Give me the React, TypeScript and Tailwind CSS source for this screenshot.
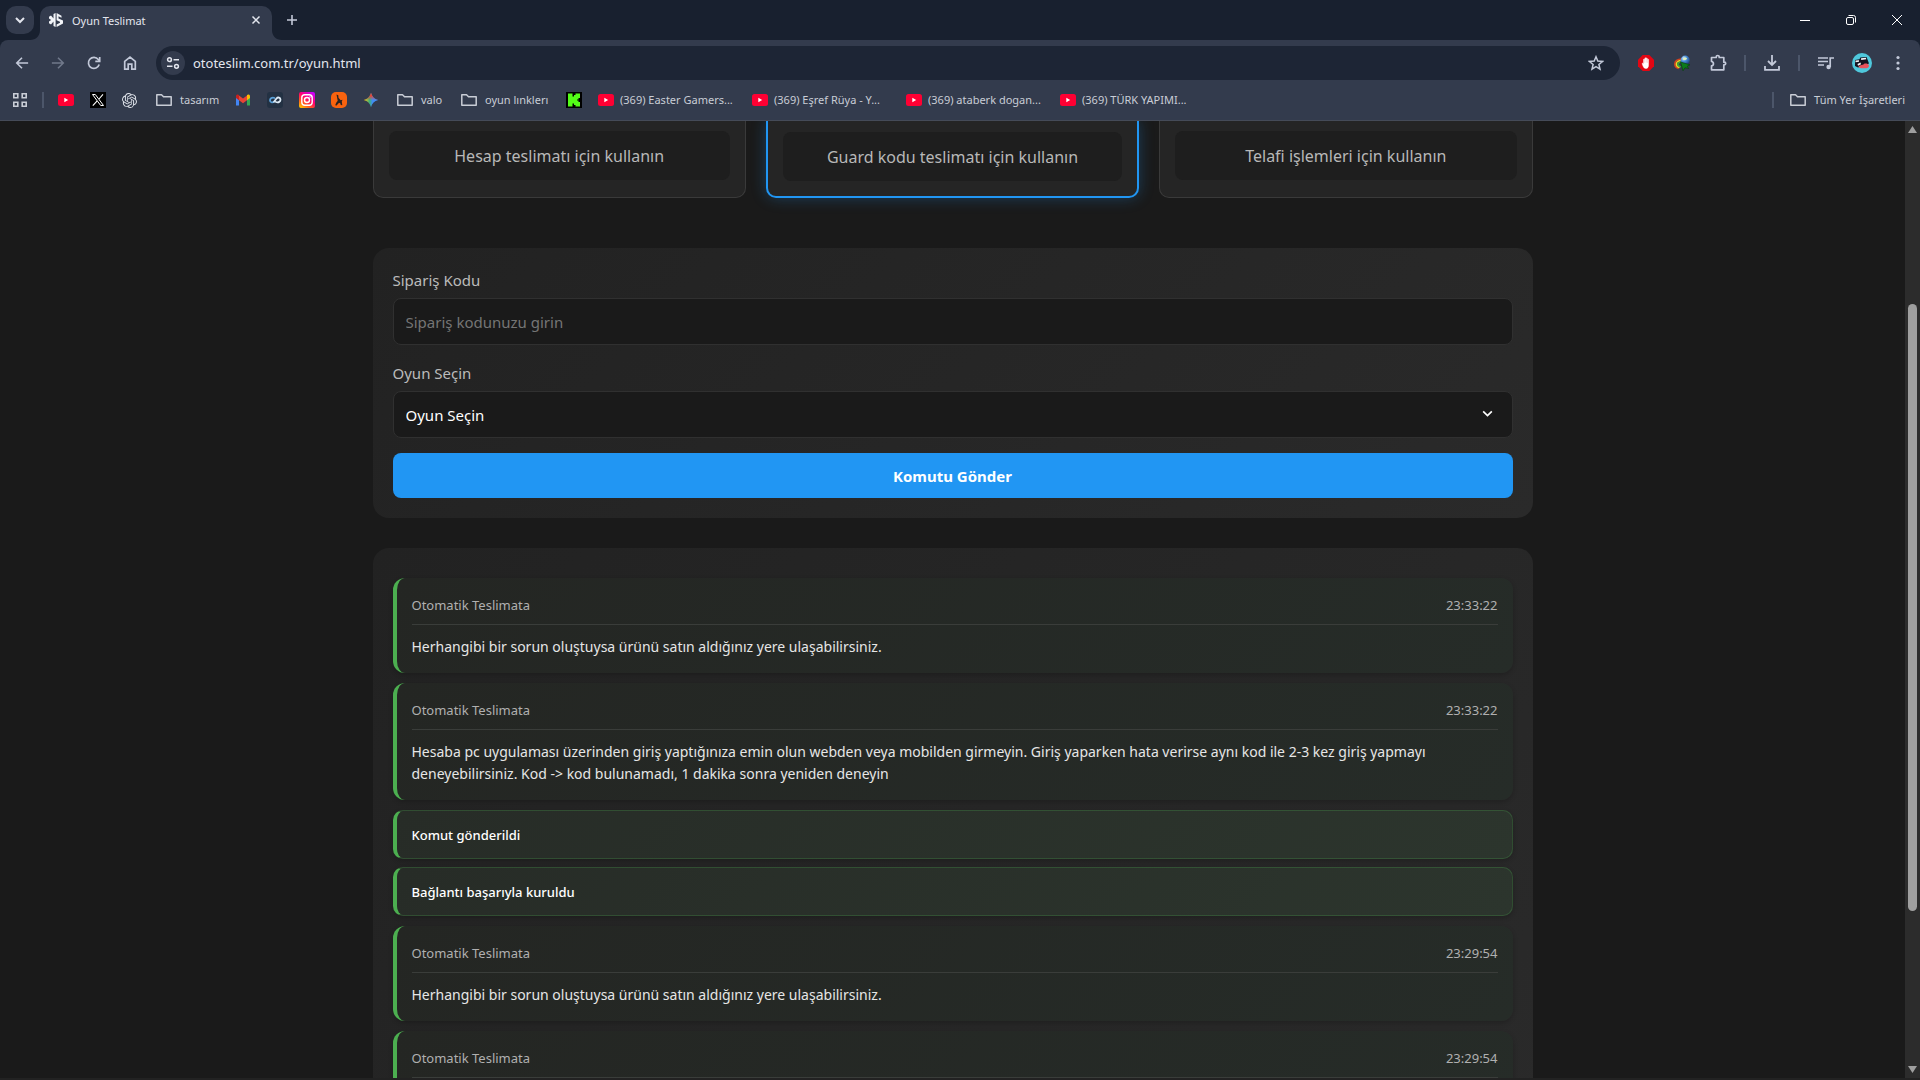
import type { ReactNode } from "react";
import { SiOpenai } from "react-icons/si";

/* ---------- toolbar icons ---------- */

const ChevronIcon = ({ className, strokeWidth = 2 }: { className?: string; strokeWidth?: number }) => (
  <svg viewBox="0 0 12 12" className={className} fill="none" stroke="currentColor" strokeWidth={strokeWidth}>
    <path d="M2 4l4 4 4-4" />
  </svg>
);

const BackIcon = ({ className }: { className?: string }) => (
  <svg viewBox="0 0 16 16" className={className} fill="none" stroke="currentColor" strokeWidth="1.8">
    <path d="M15 8H2.500M8 2L2 8l6 6" />
  </svg>
);

const ReloadIcon = () => (
  <svg viewBox="0 0 16 16" className="size-4" fill="none" stroke="currentColor" strokeWidth="1.7">
    <path d="M13.200 9.500A5.500 5.500 0 1 1 12.300 4.500L13.500 6" />
    <path d="M13.700 2v4.400H9.300" />
  </svg>
);

const HomeIcon = () => (
  <svg viewBox="0 0 16 16" className="size-4" fill="none" stroke="currentColor" strokeWidth="1.7">
    <path d="M2.700 6.300L8 2l5.300 4.300v7.900H9.800V9.200H6.200v5H2.700z" />
  </svg>
);

const TuneIcon = () => (
  <svg viewBox="0 0 16 16" className="size-4" fill="none" stroke="currentColor" strokeWidth="1.5">
    <circle cx="4.500" cy="4.700" r="1.900" />
    <path d="M8.500 4.700H14M2 11.300h5.500" />
    <circle cx="11.500" cy="11.300" r="1.900" />
  </svg>
);

const StarIcon = () => (
  <svg viewBox="0 0 16 16" className="size-4" fill="none" stroke="currentColor" strokeWidth="1.500">
    <path d="M8 1.800l1.800 4.300 4.700.4-3.600 3 1.100 4.600L8 11.700l-4 2.400 1.100-4.600-3.600-3 4.700-.4z" />
  </svg>
);

const AdblockIcon = () => (
  <svg viewBox="0 0 16 16" className="size-4">
    <path d="M4.700 0h6.600L16 4.700v6.600L11.300 16H4.700L0 11.300V4.700z" fill="#e30613" />
    <path
      d="M4 8.400c.6-.5 1.100-.1 1.500.6V4.500c0-.8 1-.8 1 0v3h.3V3.300c0-.9 1.100-.9 1.100 0v4.200h.3V3.500c0-.9 1.100-.9 1.100 0v4.200h.3V4.700c0-.8 1-.8 1 0v5.200c0 2.400-1 3.600-2.800 3.600-1.600 0-2.500-1.200-3.800-5.100z"
      fill="#fff"
      stroke="#fff"
      strokeWidth=".4"
    />
  </svg>
);

const DownloadManagerIcon = () => (
  <svg viewBox="0 0 16 16" className="size-4">
    <defs>
      <radialGradient id="globe" cx="0.35" cy="0.3" r="0.8">
        <stop offset="0" stopColor="#d9efff" />
        <stop offset="0.4" stopColor="#4a8ed8" />
        <stop offset="1" stopColor="#16346f" />
      </radialGradient>
    </defs>
    <path d="M7.500 4C3.500 4 .8 6.200.8 9c0 2.200 1.600 4 4 4.500" fill="none" stroke="#d9411e" strokeWidth="1.500" />
    <path d="M7.500 5.500C4.300 5.500 2.300 7 2.300 9c0 1.700 1.200 3 3.300 3.600" fill="none" stroke="#f3d321" strokeWidth="1.500" />
    <path d="M8 7C5.500 7 3.800 7.900 3.800 9.300c0 1.200 1 2 3 2.700" fill="none" stroke="#37a93a" strokeWidth="1.600" />
    <circle cx="11.200" cy="5.200" r="4.600" fill="url(#globe)" />
    <path d="M9.200 3.700c1-1.600 3-1.400 3.600-.6.700 1-1 2-1.800 1.800-1 0-2.300.4-1.800-1.200z" fill="#dff0b8" />
    <path d="M6.500 7l9.500 2.800-2.800 1.400 1.500 2.300-3.700-.7L9 15.800z" fill="#0c7a1c" stroke="#063f0c" strokeWidth=".6" />
  </svg>
);

const PuzzleIcon = () => (
  <svg viewBox="0 0 18 18" className="size-[18px]" fill="none" stroke="currentColor" strokeWidth="1.700" strokeLinejoin="round">
    <path d="M2.500 3.500h4.700V3a1.500 1.500 0 0 1 3 0v.5h4.600v4.700h.6a1.300 1.300 0 0 1 0 2.600h-.6v5H2.500v-3.900c2.600-.4 2.600-4 0-4.400z" />
  </svg>
);

const DownloadIcon = () => (
  <svg viewBox="0 0 16 16" className="size-4" fill="none" stroke="currentColor" strokeWidth="1.800">
    <path d="M8 0v9.500M4 6l4 4 4-4M1 11v3.800h14V11" />
  </svg>
);

const MediaIcon = () => (
  <svg viewBox="0 0 16 16" className="size-4" fill="none" stroke="currentColor" strokeWidth="1.700">
    <path d="M0 3h10M0 6.500h10M0 10h6" />
    <path d="M12.200 12V3H16" />
    <circle cx="10.600" cy="12" r="2.200" fill="currentColor" stroke="none" />
  </svg>
);

const AvatarIcon = () => (
  <svg viewBox="0 0 20 20" className="size-5">
    <circle cx="10" cy="10" r="10" fill="#4fc8dc" />
    <path d="M3 7l4.500-.8.800-1.700 6.200-.5 1 2.500 1.500 4-5 2-6 2L3 13z" fill="#15121f" />
    <path d="M3.500 7.500l3.500-.3v1.500l-3.500.6z" fill="#f4f4f8" />
    <path d="M9 5.300l5-.6.200 1.500-5 .7z" fill="#f4f4f8" />
    <path d="M5.500 11l3-1.400.5 1.700-3 1.400z" fill="#f4f4f8" />
    <path d="M6.500 13.500c1.500-1.800 5-1.400 6-3 1.500-.3 4.500.2 4.500 2.200 0 2.300-2.300 2.600-5 2.500-2.200 0-4.700.3-5.500-1.700z" fill="#e8525c" />
  </svg>
);

const DotsIcon = () => (
  <svg viewBox="0 0 16 16" className="size-4" fill="currentColor">
    <circle cx="8" cy="2.500" r="1.600" />
    <circle cx="8" cy="8" r="1.600" />
    <circle cx="8" cy="13.500" r="1.600" />
  </svg>
);

/* ---------- bookmark icons ---------- */

const SiteLogo = () => (
  <svg viewBox="0 0 16 16" className="size-4" fill="#f2f4f8">
    <path d="M7.600 1v14L5.500 14V9.500L3 12.500 1 11.300V9.500L3.200 8 1 6.500V4.700L3 3.500l2.500 3V2z" />
    <path d="M8.600 1l4.900 2.700v2L10.500 4.300v2.200L15 8.500v3L8.600 15v-2.600l3.400-1.700v-.9L8.600 8.300z" />
  </svg>
);

const AppsIcon = () => (
  <svg viewBox="0 0 16 16" className="size-4" fill="none" stroke="currentColor" strokeWidth="1.600">
    <path d="M1.800 1.800h4v4h-4zM10.200 1.800h4v4h-4zM1.800 10.200h4v4h-4zM10.200 10.200h4v4h-4z" />
  </svg>
);

const FolderIcon = () => (
  <svg viewBox="0 0 20 20" className="size-5 shrink-0" fill="none" stroke="currentColor" strokeWidth="1.500">
    <path d="M2.800 4.800h4.700l2 2h7.700v8.400H2.800z" strokeLinejoin="round" />
  </svg>
);

const YoutubeIcon = () => (
  <svg viewBox="0 0 16 16" className="size-4 shrink-0">
    <rect y="2" width="16" height="12" rx="2.500" fill="#ff0033" />
    <path d="M6.300 5.700L10.200 8l-3.900 2.300z" fill="#fff" />
  </svg>
);

const XIcon = () => (
  <svg viewBox="0 0 16 16" className="size-4">
    <rect width="16" height="16" fill="#000" />
    <path d="M2.500 2.500h2.800l8.200 11h-2.800z" fill="none" stroke="#fff" />
    <path d="M13 2.300L9 7M7 9.200l-4.200 4.500" stroke="#fff" strokeWidth="1.100" />
  </svg>
);

const GmailIcon = () => (
  <svg viewBox="0 0 16 16" className="size-4">
    <path d="M1 4v9.500h3V7z" fill="#4285f4" />
    <path d="M15 4v9.500h-3V7z" fill="#34a853" />
    <path d="M4 3.500v4.800l4 3 4-3V3.500l-4 3z" fill="#ea4335" />
    <path d="M1 4.200c0-1.800 1.800-2.200 3-1.200v5.300L1 6z" fill="#c5221f" />
    <path d="M15 4.200c0-1.800-1.800-2.200-3-1.200v5.300L15 6z" fill="#fbbc04" />
  </svg>
);

const WaveIcon = () => (
  <svg viewBox="0 0 16 16" className="size-4" fill="none" strokeWidth="1.800" strokeLinecap="round">
    <rect width="16" height="16" rx="3" fill="#233143" />
    <path d="M7.500 6C5 5 3 6.500 3 8.300c0 2 2.300 2.700 4 1.500" stroke="#5aa0d8" />
    <path d="M7 9.800l2.500-3.300c1.500-1.800 4-.9 4 1.200 0 1.900-2 3.200-4.500 2.300" stroke="#dceaf6" />
  </svg>
);

const InstagramIcon = () => (
  <svg viewBox="0 0 16 16" className="size-4">
    <defs>
      <linearGradient id="insta" x1="0.1" y1="1" x2="0.8" y2="0">
        <stop offset="0" stopColor="#ffc800" />
        <stop offset="0.3" stopColor="#ff5a1f" />
        <stop offset="0.6" stopColor="#ff0070" />
        <stop offset="1" stopColor="#c800ff" />
      </linearGradient>
    </defs>
    <rect width="16" height="16" rx="2" fill="url(#insta)" />
    <rect x="2.800" y="2.800" width="10.400" height="10.400" rx="3" fill="none" stroke="#fff" strokeWidth="1.400" />
    <circle cx="8" cy="8" r="2.500" fill="none" stroke="#fff" strokeWidth="1.400" />
    <circle cx="11" cy="5" r=".7" fill="#fff" />
  </svg>
);

const OrangeIcon = () => (
  <svg viewBox="0 0 16 16" className="size-4">
    <rect width="16" height="16" rx="5" fill="#f9630f" />
    <path
      d="M5.500 2.500l1.800.8.200 2.500 2.200 2.500 1.800-.5-.7 1.700.5 3.700-1.500-.2-.8-2.300-1.800.7-1.500 2-1.500-.2 1-2.500 1.500-2z"
      fill="#2b2320"
    />
  </svg>
);

const GeminiIcon = () => (
  <svg viewBox="0 0 16 16" className="size-4">
    <defs>
      <linearGradient id="gem" x1="0" y1="0.5" x2="1" y2="0.5">
        <stop offset="0.05" stopColor="#f6c514" />
        <stop offset="0.4" stopColor="#3fae7a" />
        <stop offset="0.6" stopColor="#3f8cf4" />
        <stop offset="1" stopColor="#4b8bf5" />
      </linearGradient>
      <linearGradient id="gemTop" x1="0" y1="0" x2="0" y2="1">
        <stop offset="0.2" stopColor="#ea4335" />
        <stop offset="0.5" stopColor="#ea4335" stopOpacity="0" />
      </linearGradient>
    </defs>
    <path d="M8 .8C9.200 4.800 11.200 6.800 15.200 8 11.200 9.200 9.200 11.200 8 15.200 6.800 11.200 4.800 9.200.8 8 4.800 6.800 6.800 4.800 8 .8z" fill="url(#gem)" />
    <path d="M8 .8C9.200 4.800 11.200 6.800 15.200 8 11.200 9.200 9.200 11.200 8 15.200 6.800 11.200 4.800 9.200.8 8 4.800 6.800 6.800 4.800 8 .8z" fill="url(#gemTop)" />
  </svg>
);

const KickIcon = () => (
  <svg viewBox="0 0 16 16" className="size-4">
    <rect width="16" height="16" fill="#000" />
    <path
      d="M2 1.500h4.500v3H8V3h1.500V1.500H14V6h-1.500v1.500H11v1h1.500V10H14v4.500H9.500V13H8v-1.500H6.500v3H2z"
      fill="#53fc18"
    />
  </svg>
);

type Bookmark = { icon: ReactNode; label?: string; name: string; className?: string };

const bookmarks: Bookmark[] = [
  { icon: <YoutubeIcon />, name: "YouTube" },
  { icon: <XIcon />, name: "X" },
  { icon: <SiOpenai className="size-[15px] text-[#dfe3ea]" />, name: "ChatGPT" },
  { icon: <FolderIcon />, name: "tasarım", label: "tasarım", className: "w-[81px]" },
  { icon: <GmailIcon />, name: "Gmail" },
  { icon: <WaveIcon />, name: "Wave" },
  { icon: <InstagramIcon />, name: "Instagram" },
  { icon: <OrangeIcon />, name: "Games" },
  { icon: <GeminiIcon />, name: "Gemini" },
  { icon: <FolderIcon />, name: "valo", label: "valo", className: "w-16" },
  { icon: <FolderIcon />, name: "oyun", label: "oyun lınklerı", className: "w-[107px]" },
  { icon: <KickIcon />, name: "Kick" },
  { icon: <YoutubeIcon />, name: "Easter", label: "(369) Easter Gamers...", className: "w-[154px]" },
  { icon: <YoutubeIcon />, name: "Eşref", label: "(369) Eşref Rüya - Y...", className: "w-[154px]" },
  { icon: <YoutubeIcon />, name: "ataberk", label: "(369) ataberk dogan...", className: "w-[154px]" },
  { icon: <YoutubeIcon />, name: "Türk", label: "(369) TÜRK YAPIMI...", className: "w-[154px]" },
];

const ToolButton = ({ label, className = "", children }: { label: string; className?: string; children: ReactNode }) => (
  <button aria-label={label} className={`flex size-7 shrink-0 items-center justify-center ${className}`}>
    {children}
  </button>
);

const Divider = () => <span className="h-4 w-[2px] shrink-0 bg-[#4c566a]" />;

const TabStrip = () => (
  <div className="flex h-10 shrink-0 items-center bg-[#18202f] pl-[6px]">
    <button aria-label="Sekmelerde ara" className="flex size-7 items-center justify-center rounded-[10px] bg-[#333b4d] text-[#e3e6ee]">
      <ChevronIcon className="size-3" />
    </button>
    <div className="relative ml-[6px] flex h-[34px] w-[232px] items-center self-end rounded-t-[10px] bg-[#333b4d] pr-2 pb-[6px] pl-2 text-[11px] text-[#e3e6ee]">
      <svg viewBox="0 0 10 10" className="absolute bottom-0 -left-[10px] size-[10px]">
        <path d="M10 0v10H0C6 10 10 6 10 0z" fill="#333b4d" />
      </svg>
      <svg viewBox="0 0 10 10" className="absolute -right-[10px] bottom-0 size-[10px]">
        <path d="M0 0v10h10C4 10 0 6 0 0z" fill="#333b4d" />
      </svg>
      <SiteLogo />
      <span className="ml-2 flex-1 pt-[2px]">Oyun Teslimat</span>
      <button aria-label="Sekmeyi kapat" className="flex size-4 items-center justify-center">
        <svg viewBox="0 0 10 10" className="size-[10px]" stroke="currentColor" strokeWidth="1.500">
          <path d="M1.500 1.500l7 7M8.500 1.500l-7 7" />
        </svg>
      </button>
    </div>
    <button aria-label="Yeni sekme" className="ml-[6px] flex size-7 items-center justify-center text-[#c3c9d9]">
      <svg viewBox="0 0 12 12" className="size-3" stroke="currentColor" strokeWidth="1.600">
        <path d="M6 1v10M1 6h10" />
      </svg>
    </button>
    <div className="ml-auto flex h-full text-white">
      <button aria-label="Simge durumuna küçült" className="flex w-[46px] items-center justify-center">
        <svg viewBox="0 0 10 10" className="size-[10px]" stroke="currentColor">
          <path d="M0 5.500h10" />
        </svg>
      </button>
      <button aria-label="Geri yükle" className="flex w-[46px] items-center justify-center">
        <svg viewBox="0 0 10 10" className="size-[10px]" fill="none" stroke="currentColor">
          <rect x=".5" y="2.500" width="7" height="7" rx="1.500" />
          <path d="M2.500 .5H7.500a2 2 0 0 1 2 2V7.500" />
        </svg>
      </button>
      <button aria-label="Kapat" className="flex w-[46px] items-center justify-center">
        <svg viewBox="0 0 10 10" className="size-[10px]" stroke="currentColor">
          <path d="M0 0l10 10M10 0L0 10" />
        </svg>
      </button>
    </div>
  </div>
);

const Toolbar = () => (
  <div className="bg-[#18202f]">
    <div className="flex h-[46px] items-center gap-2 rounded-t-lg bg-[#333b4d] px-2 text-[#c3c9d9]">
      <ToolButton label="Geri">
        <BackIcon className="size-[14px]" />
      </ToolButton>
      <ToolButton label="İleri" className="text-[#71798b]">
        <BackIcon className="size-[14px] rotate-180" />
      </ToolButton>
      <ToolButton label="Yenile">
        <ReloadIcon />
      </ToolButton>
      <ToolButton label="Ana sayfa">
        <HomeIcon />
      </ToolButton>
      <div className="mx-1 flex h-[34px] flex-1 items-center rounded-full bg-[#1d2535] pr-[10px] pl-[5px]">
        <button aria-label="Site bilgileri" className="flex size-6 items-center justify-center rounded-full bg-[#333b4d] text-[#e3e6ee]">
          <TuneIcon />
        </button>
        <input
          aria-label="Adres çubuğu"
          className="ml-2 flex-1 bg-transparent text-[13px] leading-5 text-[#e3e6ee] outline-none"
          defaultValue="ototeslim.com.tr/oyun.html"
        />
        <ToolButton label="Yer işareti ekle">
          <StarIcon />
        </ToolButton>
      </div>
      <ToolButton label="AdBlock">
        <AdblockIcon />
      </ToolButton>
      <ToolButton label="İndirme yöneticisi">
        <DownloadManagerIcon />
      </ToolButton>
      <ToolButton label="Uzantılar">
        <PuzzleIcon />
      </ToolButton>
      <span className="mx-1 flex">
        <Divider />
      </span>
      <ToolButton label="İndirilenler">
        <DownloadIcon />
      </ToolButton>
      <span className="mx-1 flex">
        <Divider />
      </span>
      <ToolButton label="Medya">
        <MediaIcon />
      </ToolButton>
      <ToolButton label="Profil">
        <AvatarIcon />
      </ToolButton>
      <ToolButton label="Menü">
        <DotsIcon />
      </ToolButton>
    </div>
  </div>
);

const BookmarksBar = () => (
  <nav className="flex h-[35px] shrink-0 items-center border-b border-[#454b58] bg-[#333b4d] pb-[6px] pl-[6px] text-[11px] text-[#c9cdd6]">
    <ToolButton label="Uygulamalar">
      <AppsIcon />
    </ToolButton>
    <span className="mr-[6px] ml-2 flex">
      <Divider />
    </span>
    {bookmarks.map((b) => (
      <a
        key={b.name}
        href="#"
        aria-label={b.label ? undefined : b.name}
        className={`flex h-7 shrink-0 items-center gap-[6px] px-2 whitespace-nowrap ${b.className ?? "w-8"}`}
      >
        {b.icon}
        {b.label}
      </a>
    ))}
    <span className="ml-auto flex">
      <Divider />
    </span>
    <a href="#" className="ml-[6px] flex h-7 items-center gap-[6px] px-2 pr-[15px] whitespace-nowrap">
      <FolderIcon />
      Tüm Yer İşaretleri
    </a>
  </nav>
);

/* ---------- page ---------- */

const services = [
  { text: "Hesap teslimatı için kullanın", active: false },
  { text: "Guard kodu teslimatı için kullanın", active: true },
  { text: "Telafi işlemleri için kullanın", active: false },
];

type Log = { type: "message" | "info"; text?: string; time?: string };

const logs: Log[] = [
  { type: "message", time: "23:33:22", text: "Herhangibi bir sorun oluştuysa ürünü satın aldığınız yere ulaşabilirsiniz." },
  {
    type: "message",
    time: "23:33:22",
    text: "Hesaba pc uygulaması üzerinden giriş yaptığınıza emin olun webden veya mobilden girmeyin. Giriş yaparken hata verirse aynı kod ile 2-3 kez giriş yapmayı deneyebilirsiniz. Kod -> kod bulunamadı, 1 dakika sonra yeniden deneyin",
  },
  { type: "info", text: "Komut gönderildi" },
  { type: "info", text: "Bağlantı başarıyla kuruldu" },
  { type: "message", time: "23:29:54", text: "Herhangibi bir sorun oluştuysa ürünü satın aldığınız yere ulaşabilirsiniz." },
  { type: "message", time: "23:29:54" },
];

const ServiceCard = ({ text, active }: { text: string; active: boolean }) => (
  <div
    className={
      active
        ? "rounded-b-[10px] border-2 border-t-0 border-[#2196f3] bg-[#252525] px-[15px] pt-[11px] pb-[15px] shadow-[0_0_15px_rgba(33,150,243,0.3)]"
        : "rounded-b-[10px] border border-t-0 border-[#3a3a3a] bg-[#252525] px-[15px] pt-[10px] pb-[17px]"
    }
  >
    <p className="rounded-lg bg-[#1e1e1e] pt-[13px] pb-[11px] text-center text-[16px] leading-[25px] text-[#b8b8b8]">
      {text}
    </p>
  </div>
);

const MessageItem = ({ log }: { log: Log }) => (
  <li className="my-[10px] rounded-xl border-l-4 border-[#4caf50] bg-linear-[135deg,#242623,#262c28] p-[15px] shadow-[0_2px_5px_rgba(0,0,0,0.2)]">
    <div className="flex justify-between border-b border-[#3a3d3a] pb-[6px] text-[13px] leading-[25px] text-[#b0b0b0]">
      <span>Otomatik Teslimata</span>
      <time>{log.time}</time>
    </div>
    <p className="mt-[11px] min-h-[22px] text-[14px] leading-[22px] text-[#e6e6e6]">{log.text}</p>
  </li>
);

const InfoItem = ({ log }: { log: Log }) => (
  <li className="my-2 rounded-[10px] border border-l-4 border-[#4caf50]/25 border-l-[#4caf50] bg-linear-[135deg,#272c27,#2c352d] px-[15px] pt-3 pb-[10px] text-[13px] leading-[25px] font-medium text-white shadow-[0_2px_5px_rgba(0,0,0,0.2)]">
    {log.text}
  </li>
);

const OrderForm = () => (
  <form
    className="mt-[50px] rounded-2xl bg-linear-[135deg,#222222,#2a2a2a] p-5 text-[15px]"
    onSubmit={(e) => e.preventDefault()}
  >
    <label htmlFor="code" className="mb-[6px] block leading-6 text-[#bbbbbb]">
      Sipariş Kodu
    </label>
    <input
      id="code"
      placeholder="Sipariş kodunuzu girin"
      className="mb-4 block h-[47px] w-full rounded-lg border border-[#303030] bg-[#1a1a1a] px-3 text-white outline-none placeholder:text-[#757575]"
    />
    <label htmlFor="game" className="mb-[6px] block leading-6 text-[#bbbbbb]">
      Oyun Seçin
    </label>
    <div className="relative mb-[15px]">
      <select
        id="game"
        className="block h-[47px] w-full appearance-none rounded-lg border border-[#303030] bg-[#1a1a1a] px-3 pt-[2px] text-white outline-none"
      >
        <option>Oyun Seçin</option>
      </select>
      <ChevronIcon strokeWidth={1.5} className="pointer-events-none absolute top-4 right-[19px] size-[13px] text-white" />
    </div>
    <button type="submit" className="block h-[45px] w-full rounded-lg bg-[#2196f3] pt-[2px] font-bold text-white">
      Komutu Gönder
    </button>
  </form>
);

const ScrollBar = () => (
  <div className="flex w-[15px] shrink-0 flex-col items-center bg-[#2c2c2c] py-[5px]">
    <svg viewBox="0 0 9 7" className="h-[7px] w-[9px]" fill="#9f9f9f">
      <path d="M4.500 0L9 7H0z" />
    </svg>
    <div className="flex w-full flex-1 flex-col items-center">
      <div className="grow-171" />
      <div className="w-[9px] grow-607 rounded-full bg-[#9f9f9f]" />
      <div className="grow-155" />
    </div>
    <svg viewBox="0 0 9 7" className="h-[7px] w-[9px]" fill="#9f9f9f">
      <path d="M4.500 7L9 0H0z" />
    </svg>
  </div>
);

const App = () => {
  return (
    <div className="flex h-screen flex-col overflow-hidden bg-[#222222] font-['Noto_Sans','Open_Sans',sans-serif]">
      <header className="shrink-0">
        <TabStrip />
        <Toolbar />
        <BookmarksBar />
      </header>
      <div className="mb-[2px] flex min-h-0 flex-1 bg-[#1a1a1a]">
        <main className="flex-1 overflow-hidden">
          <div className="mx-auto max-w-[1200px] px-5">
            <div className="grid grid-cols-3 gap-5">
              {services.map((s) => (
                <ServiceCard key={s.text} text={s.text} active={s.active} />
              ))}
            </div>
            <OrderForm />
            <ul className="mt-[30px] flow-root rounded-2xl bg-linear-[135deg,#222222,#2a2a2a] p-5">
              {logs.map((log, i) =>
                log.type === "message" ? <MessageItem key={i} log={log} /> : <InfoItem key={i} log={log} />
              )}
            </ul>
          </div>
        </main>
        <ScrollBar />
      </div>
    </div>
  );
};

export default App;
